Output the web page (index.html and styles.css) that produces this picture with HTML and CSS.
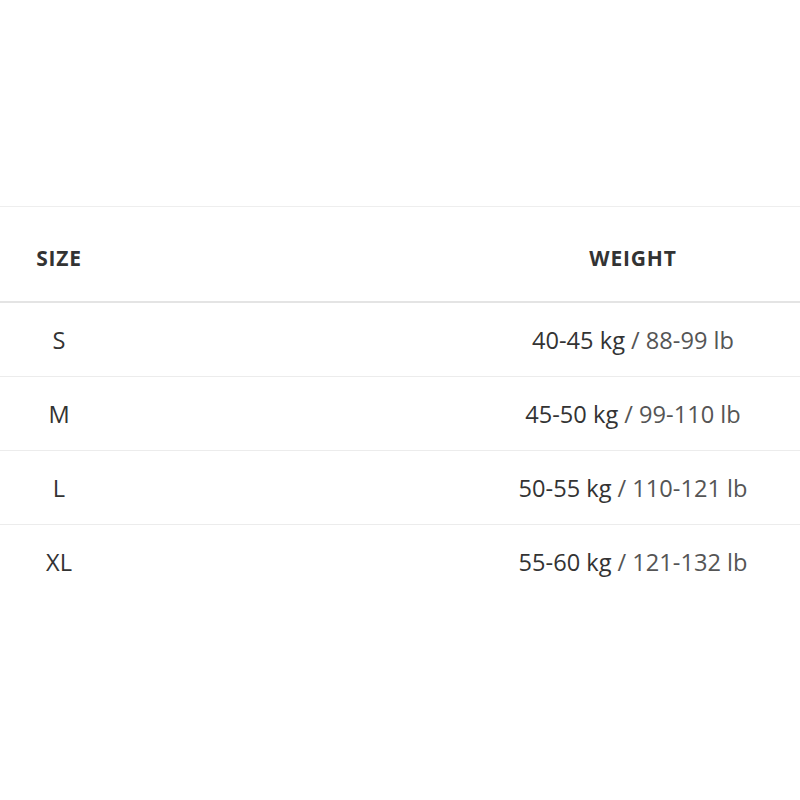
FILE: index.html
```html
<!DOCTYPE html>
<html lang="en">
<head>
  <meta charset="UTF-8">
  <title>Size Chart</title>
  <link rel="stylesheet" href="styles.css">
</head>
<body>
  <div class="size-chart">
    <div class="row head">
      <div class="cell size">SIZE</div>
      <div class="cell weight">WEIGHT</div>
    </div>
    <div class="row">
      <div class="cell size">S</div>
      <div class="cell weight">40-45 kg <span class="lb">/ 88-99 lb</span></div>
    </div>
    <div class="row">
      <div class="cell size">M</div>
      <div class="cell weight">45-50 kg <span class="lb">/ 99-110 lb</span></div>
    </div>
    <div class="row">
      <div class="cell size">L</div>
      <div class="cell weight">50-55 kg <span class="lb">/ 110-121 lb</span></div>
    </div>
    <div class="row last">
      <div class="cell size">XL</div>
      <div class="cell weight">55-60 kg <span class="lb">/ 121-132 lb</span></div>
    </div>
  </div>
</body>
</html>
```

FILE: styles.css
```css
body {
  margin: 0;
  background-color: #fff;
  font-family: "Open Sans", Arial, sans-serif;
  color: #333;
}
.size-chart {
  margin-top: 206px;
  border-top: 1px solid #eee;
}
.row {
  display: grid;
  grid-template-columns: 118px 1fr 334px;
  align-items: center;
  height: 73px;
  border-bottom: 1px solid #ececec;
  font-size: 23.6px;
}
.row.head {
  height: 96px;
  border-bottom: 2px solid #e4e4e4;
  font-size: 21px;
  font-weight: 700;
  letter-spacing: 0.8px;
  padding-top: 8px;
  box-sizing: border-box;
}
.row.last {
  border-bottom: none;
}
.cell {
  text-align: center;
}
.weight {
  grid-column: 3;
}
.lb {
  color: #555;
}
```
